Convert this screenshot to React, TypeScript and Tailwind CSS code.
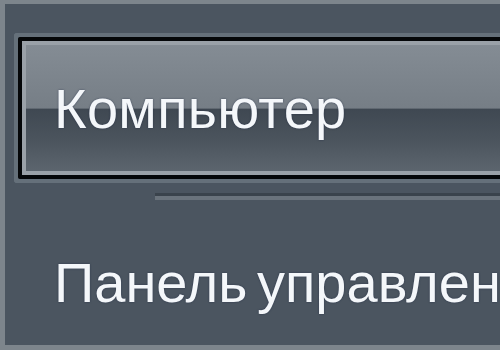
import React from 'react';

const App: React.FC = () => {
  return (
    <div className="w-[500px] h-[350px] overflow-hidden bg-[#7d858c] pt-[4px] pl-[5px] pb-[5px] flex flex-col" style={{ fontFamily: '"Liberation Sans", Arial, sans-serif' }}>
      <div className="flex-1 bg-[#4b5560] flex flex-col whitespace-nowrap">
        {/* hovered item */}
        <div className="mt-[29px] ml-[9px] border-y-4 border-l-4 border-[#65707a] rounded-l-[3px]">
          <div className="border-y-4 border-l-4 border-[#050709] rounded-l-[3px]">
            <div className="border-y-4 border-l-4 border-[#9aa1a8]">
              <div className="h-[126px] pl-[28px] pt-[36px] bg-[linear-gradient(to_bottom,#848c94_0%,#767e86_50%,#3f4852_51%,#4b545d_75%,#5c656e_100%)]">
                <span className="text-[56px] leading-[56px] tracking-[0.3px] text-[#f4f7fa] [text-shadow:0_0_2px_rgba(20,30,60,0.6)]">Компьютер</span>
              </div>
            </div>
          </div>
        </div>

        <div className="mt-[10px] ml-[150px]">
          <div className="h-[3px] bg-[#3a434c]" />
          <div className="h-[4px] bg-[#6a737c]" />
        </div>

        <div className="mt-[55px] pl-[49px] text-[56px] leading-[56px] [word-spacing:-6px] text-[#f4f7fa] [text-shadow:0_0_2px_rgba(20,30,60,0.6)]">
          Панель управления
        </div>
      </div>
    </div>
  );
};

export default App;
